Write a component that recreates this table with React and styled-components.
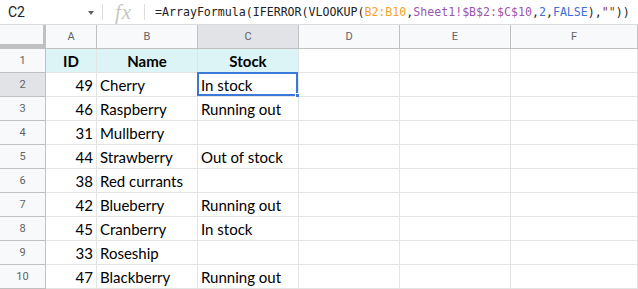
import React from "react";
import styled, { createGlobalStyle } from "styled-components";

const rows = [
  { id: 49, name: "Cherry", stock: "In stock" },
  { id: 46, name: "Raspberry", stock: "Running out" },
  { id: 31, name: "Mullberry", stock: "" },
  { id: 44, name: "Strawberry", stock: "Out of stock" },
  { id: 38, name: "Red currants", stock: "" },
  { id: 42, name: "Blueberry", stock: "Running out" },
  { id: 45, name: "Cranberry", stock: "In stock" },
  { id: 33, name: "Roseship", stock: "" },
  { id: 47, name: "Blackberry", stock: "Running out" }
];

const columns = ["A", "B", "C", "D", "E", "F"];

const App = () => {
  return (
    <Page>
      <GlobalStyle />
      <FormulaBar>
        <NameBox>
          <span>C2</span>
          <Caret />
        </NameBox>
        <Divider />
        <Fx>fx</Fx>
        <Divider />
        <Formula>
          =ArrayFormula(IFERROR(VLOOKUP(<Ref $color="#f4a12c">B2:B10</Ref>,
          <Ref $color="#9c55ad">Sheet1!$B$2:$C$10</Ref>,
          <Ref $color="#3f6fd8">2</Ref>,<Ref $color="#3f6fd8">FALSE</Ref>),
          <Ref $color="#7a3a3a">""</Ref>))
        </Formula>
      </FormulaBar>

      <Grid>
        <Corner />
        {columns.map(c => (
          <ColHeader key={c} $active={c === "C"}>
            {c}
          </ColHeader>
        ))}

        <RowHeader>1</RowHeader>
        <Cell $head $align="center">ID</Cell>
        <Cell $head $align="center">Name</Cell>
        <Cell $head $align="center">Stock</Cell>
        <Cell />
        <Cell />
        <Cell />

        {rows.map((r, i) => (
          <React.Fragment key={r.id}>
            <RowHeader $active={i === 0}>{i + 2}</RowHeader>
            <Cell $align="right">{r.id}</Cell>
            <Cell>{r.name}</Cell>
            <Cell $selected={i === 0}>{r.stock}</Cell>
            <Cell />
            <Cell />
            <Cell />
          </React.Fragment>
        ))}
      </Grid>
    </Page>
  );
};

const GlobalStyle = createGlobalStyle`
  body {
    margin: 0;
    background: #fff;
    overflow: hidden;
  }
`;

const Page = styled.div`
  width: 638px;
  height: 289px;
  overflow: hidden;
  font-family: Roboto, "Liberation Sans", Arial, sans-serif;
`;

const FormulaBar = styled.div`
  display: flex;
  align-items: center;
  height: 24px;
  border-bottom: 1px solid #dadce0;
`;

const NameBox = styled.div`
  display: flex;
  align-items: center;
  justify-content: space-between;
  width: 102px;
  box-sizing: border-box;
  padding: 0 8px 0 8px;
  font-size: 14px;
  color: #202124;
`;

const Caret = styled.span`
  width: 0;
  height: 0;
  border-left: 3.5px solid transparent;
  border-right: 3.5px solid transparent;
  border-top: 4px solid #5f6368;
  margin-top: 2px;
`;

const Divider = styled.div`
  width: 1px;
  height: 16px;
  background: #dadce0;
`;

const Fx = styled.div`
  width: 41px;
  text-align: center;
  font-family: "Liberation Serif", "DejaVu Serif", serif;
  font-style: italic;
  font-size: 21px;
  color: #c4c7c5;
  line-height: 24px;
  letter-spacing: 1px;
`;

const Formula = styled.div`
  padding-left: 10px;
  font-family: "DejaVu Sans Mono", "Liberation Mono", monospace;
  font-size: 11.6px;
  color: #222;
  white-space: nowrap;
`;

const Ref = styled.span`
  color: ${p => p.$color};
`;

const Grid = styled.div`
  display: grid;
  grid-template-columns: 46px 51px 101px 101px 101px 111px 1fr;
  grid-auto-rows: 24px;
`;

const Corner = styled.div`
  box-sizing: border-box;
  background: #f8f9fa;
  border-right: 4px solid #c0c0c0;
  border-bottom: 5px solid #c0c0c0;
  margin-right: -1px;
`;

const ColHeader = styled.div`
  box-sizing: border-box;
  display: flex;
  align-items: center;
  justify-content: center;
  background: ${p => (p.$active ? "#e1e3e6" : "#f8f9fa")};
  border-right: 1px solid #c0c0c0;
  border-bottom: 1px solid #c0c0c0;
  font-size: 11px;
  color: #5f6368;
`;

const RowHeader = styled.div`
  box-sizing: border-box;
  display: flex;
  align-items: center;
  justify-content: center;
  background: ${p => (p.$active ? "#e1e3e6" : "#f8f9fa")};
  border-right: 1px solid #c0c0c0;
  border-bottom: 1px solid #c0c0c0;
  font-size: 11px;
  color: #5f6368;
`;

const Cell = styled.div`
  position: relative;
  box-sizing: border-box;
  display: flex;
  align-items: flex-end;
  justify-content: ${p =>
    p.$align === "right" ? "flex-end" : p.$align === "center" ? "center" : "flex-start"};
  padding: 0 3px 2px 3px;
  background: ${p => (p.$head ? "#ddf4f6" : "#fff")};
  border-right: 1px solid #e2e3e3;
  border-bottom: 1px solid #e2e3e3;
  font-family: Lato, "Open Sans", sans-serif;
  font-size: 15px;
  font-weight: ${p => (p.$head ? 700 : 400)};
  color: #000;
  white-space: nowrap;

  ${p =>
    p.$selected &&
    `
    &::before {
      content: "";
      position: absolute;
      left: -1px;
      top: -1px;
      right: 0;
      bottom: 0;
      border: 2px solid #3c78d8;
    }
    &::after {
      content: "";
      position: absolute;
      right: -3px;
      bottom: -3px;
      width: 6px;
      height: 6px;
      background: #3c78d8;
      border: 1px solid #fff;
      box-sizing: border-box;
    }
  `}
`;

export default App;
